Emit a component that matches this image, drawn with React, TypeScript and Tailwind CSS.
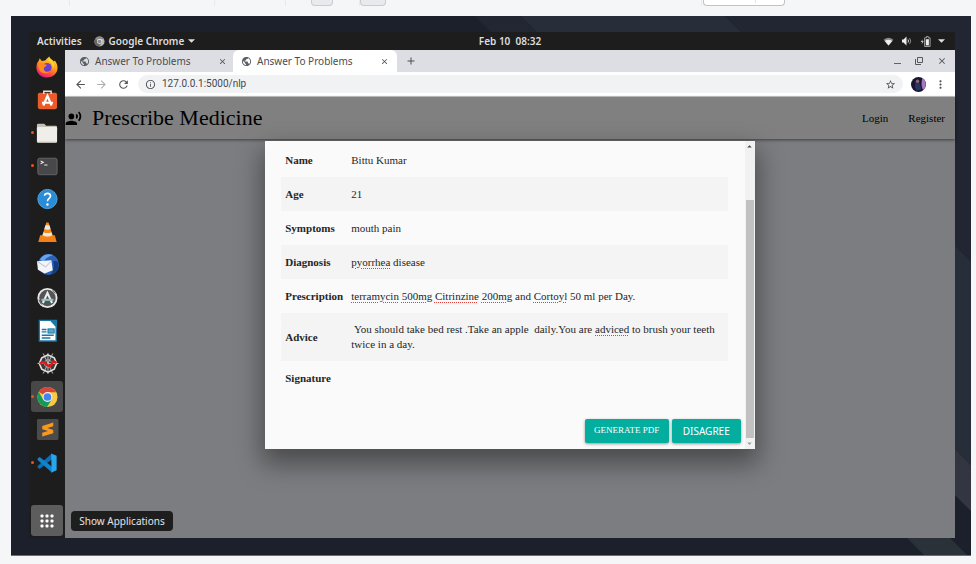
import type { ReactNode } from "react";
import {
  MdAdd,
  MdArrowBack,
  MdArrowForward,
  MdArrowDropDown,
  MdArrowDropUp,
  MdClose,
  MdInfoOutline,
  MdMoreVert,
  MdPublic,
  MdRecordVoiceOver,
  MdRefresh,
  MdStarBorder,
} from "react-icons/md";

const ui = "font-['Noto_Sans','Open_Sans',sans-serif]";
const serif = "font-['Liberation_Serif',serif]";

function Wallpaper() {
  return (
    <svg className="absolute inset-0 h-full w-full" viewBox="0 0 960 540" preserveAspectRatio="none" aria-hidden="true">
      <defs>
        <linearGradient id="band" x1="0" y1="0" x2="0" y2="1">
          <stop offset="0" stopColor="#212632" />
          <stop offset="1" stopColor="#343741" />
        </linearGradient>
      </defs>
      <rect width="960" height="540" fill="#1b202b" />
      <path d="M464 0H510L960 450V496Z" fill="url(#band)" />
      <path d="M510 0H714L960 246V450Z" fill="#282e39" />
      <path d="M714 0H960V246Z" fill="#212632" />
      <path d="M877 504H920L956 540H913Z" fill="#2b3139" />
    </svg>
  );
}

function Firefox() {
  return (
    <svg viewBox="0 0 24 24" className="size-[22px]">
      <defs>
        <linearGradient id="fx" x1="0.8" y1="0" x2="0.3" y2="1">
          <stop offset="0" stopColor="#ffe226" />
          <stop offset="0.45" stopColor="#ff9a1f" />
          <stop offset="0.75" stopColor="#ff4a3d" />
          <stop offset="1" stopColor="#e31587" />
        </linearGradient>
      </defs>
      <path d="M12 23.5C5.500 23.500.5 18.700.5 12.500C.5 9.500 1.500 7 3 5.300L4 2.500L6.300 5.500L10 5C11 3.500 13 2 14.500.5C15 3 18 4 19.500 6L20.500 5C22.500 7.500 23.500 10 23.500 12.800C23.500 19 18.500 23.500 12 23.500Z" fill="url(#fx)" />
      <circle cx="12" cy="12.500" r="5" fill="#6a3fd0" />
      <path d="M2.500 8C5 6.500 8 7.500 9 9L12 9.500C11.500 11.500 9 11.500 8.500 13.500C8.500 17.500 13 18 15.500 16C12 21 4 19 3 13Z" fill="#ff8a22" />
      <path d="M13 5C17 7 19 10 18 14.500C21 11 20 6 15.500 3Z" fill="#ffd42e" />
    </svg>
  );
}

function Software() {
  return (
    <svg viewBox="0 0 24 24" className="size-[22px]">
      <rect x="2" y="4" width="21" height="18" rx="2" fill="#ec5a29" />
      <path d="M8.500 5.500V2.500H16.500V5.500" fill="none" stroke="#e8e0dc" strokeWidth="1.600" />
      <path d="M8 18L12.500 7.500L17 18M6.500 15H18.500" fill="none" stroke="#fff" strokeWidth="2.400" />
    </svg>
  );
}

function Files() {
  return (
    <svg viewBox="0 0 24 24" className="size-[22px]">
      <path d="M1 3.500Q1 2 2.500 2H9L11 4H21.500Q23 4 23 5.500V10H1Z" fill="#c5c1b7" />
      <rect x="1" y="5.500" width="22" height="17" rx="1.500" fill="#f0eee9" />
      <path d="M1.500 22H22.500" stroke="#bdb9b0" />
    </svg>
  );
}

function Terminal() {
  return (
    <svg viewBox="0 0 24 24" className="size-[22px]">
      <rect x="2" y="3.500" width="21" height="18" rx="2" fill="#48484a" stroke="#68686a" />
      <path d="M5 6.500L8 8L5 9.500M9 11H12.500" fill="none" stroke="#eee" strokeWidth="1.100" />
    </svg>
  );
}

function Help() {
  return (
    <svg viewBox="0 0 24 24" className="size-[22px]">
      <circle cx="12.500" cy="12" r="10.500" fill="#2a8bd6" stroke="#55a8e6" />
      <path d="M9.300 8.500C9.300 5 15.800 5 15.800 8.800C15.800 11.500 12.500 11 12.500 14.500" fill="none" stroke="#fff" strokeWidth="1.800" />
      <circle cx="12.500" cy="18" r="1.300" fill="#fff" />
    </svg>
  );
}

function Vlc() {
  return (
    <svg viewBox="0 0 24 24" className="size-[22px]">
      <path d="M4.500 15.500H20.500L22.500 23H2.500Z" fill="#f57f17" />
      <path d="M11.300 1.500H13.700L18.500 17Q12.500 20.500 6.500 17Z" fill="#f48a1c" />
      <path d="M10.400 4.500H14.600L15.900 8.800Q12.500 10.200 9.100 8.800ZM8.100 12.200Q12.500 14.200 16.900 12.200L17.900 15.500Q12.500 18.500 7.100 15.500Z" fill="#e8e8e8" />
    </svg>
  );
}

function Thunderbird() {
  return (
    <svg viewBox="0 0 24 24" className="size-[23px]">
      <circle cx="13" cy="12" r="11" fill="#2b62b8" />
      <path d="M4 7Q8-1 18 2Q10 4 8 9Z" fill="#65a5ea" />
      <path d="M23.500 9Q25 19 15 23Q20 17 18 8Z" fill="#153b7d" />
      <path d="M1 8.500L16 7.500L17.500 18L9 21.500L2 17.500Z" fill="#f2f4f8" />
      <path d="M1.500 9L10 14.500L16 8.500" fill="none" stroke="#aebbd0" />
    </svg>
  );
}

function Updater() {
  return (
    <svg viewBox="0 0 24 24" className="size-[22px]">
      <circle cx="12.500" cy="12" r="10" fill="#555" stroke="#e8e8e8" strokeWidth="2" />
      <path d="M7.500 17.500L12.500 6.500L17.500 17.500" fill="none" stroke="#eee" strokeWidth="2.200" />
      <path d="M6 14H19" stroke="#8cc8d0" strokeWidth="2.200" />
      <path d="M3 14L6 19M18 3L21 7" stroke="#444" />
    </svg>
  );
}

function Writer() {
  return (
    <svg viewBox="0 0 24 24" className="size-[23px]">
      <path d="M3.500 1.500H15.500L21 7.500V23H3.500Z" fill="#fff" stroke="#1878a8" strokeWidth="1.400" />
      <path d="M14.500.8H22V9Z" fill="#1878a8" />
      <path d="M6 11H11M6 13.500H11M6 17H18.500M6 19.800H15" stroke="#1878a8" strokeWidth="1.400" />
      <rect x="12.500" y="10.300" width="6.500" height="4.400" fill="#5da4c5" stroke="#1878a8" />
    </svg>
  );
}

function Spyder() {
  return (
    <svg viewBox="0 0 24 24" className="size-[23px]">
      <circle cx="12.500" cy="12" r="8.500" fill="#3a3a3a" />
      <path d="M12.500 1V23M1.500 12H23.500M7.500 1.500L17.500 22.500M17.500 1.500L7.500 22.500" stroke="#bbb" />
      <path d="M12.500 3L19 6L21.500 12L19 18L12.500 21L6 18L3.500 12L6 6Z" fill="none" stroke="#e2e2e2" strokeWidth="1.700" />
      <path d="M12.500 8L15.300 9.200L16.500 12L15.300 14.800L12.500 16L9.700 14.800L8.500 12L9.700 9.200Z" fill="none" stroke="#aaa" />
      <path d="M4 12.500C7 9 9 11 11.500 13.500S16 14 17 11.500S20 10 21 12" fill="none" stroke="#e01818" strokeWidth="2.600" />
    </svg>
  );
}

function Chrome() {
  return (
    <svg viewBox="0 0 24 24" className="size-[22px]">
      <circle cx="12.500" cy="12" r="11" fill="#f7cb45" />
      <path d="M12.500 12L3 6.500A11 11 0 0 1 22 6.700H12.500Z" fill="#d8453b" />
      <path d="M3 6.500A11 11 0 0 0 12 23L17.200 14.700L12.500 12L7.900 14.700Z" fill="#139b58" />
      <circle cx="12.500" cy="12" r="5.400" fill="#f2f2f2" />
      <circle cx="12.500" cy="12" r="4.200" fill="#4384f0" />
    </svg>
  );
}

function GreyChrome() {
  return (
    <svg viewBox="0 0 24 24" className="size-[11px]" aria-hidden="true">
      <circle cx="12" cy="12" r="11" fill="#b8b8b8" />
      <path d="M12 12L2.500 6.500A11 11 0 0 1 21.500 6.700H12Z" fill="#8c8c8c" />
      <path d="M2.500 6.500A11 11 0 0 0 11.500 23L16.700 14.700L12 12Z" fill="#666" />
      <circle cx="12" cy="12" r="5.400" fill="#eee" />
      <circle cx="12" cy="12" r="4" fill="#888" />
    </svg>
  );
}

function Sublime() {
  return (
    <svg viewBox="0 0 24 24" className="size-[23px]">
      <rect x="1" y="1" width="22.500" height="22" rx="1.500" fill="#4b4b4b" />
      <path d="M6.500 8.300L18 4.800V8.600L12 10.500L18 12.400V15.800L6.500 19.300V15.500L12.500 13.600L6.500 11.700Z" fill="#f8981d" />
    </svg>
  );
}

function VsCode() {
  return (
    <svg viewBox="0 0 24 24" className="size-[22px]">
      <path d="M17 2L1.800 15.200V17L4 18.500L17.500 8Z" fill="#0a6fb8" />
      <path d="M17 22L1.800 8.800V7L4 5.500L17.500 16Z" fill="#1184cd" />
      <path d="M16.500 1.500L22.500 4V20L16.500 22.500L17 18Z" fill="#2aa4ee" />
    </svg>
  );
}

const dock: { name: string; icon: ReactNode; running?: boolean; active?: boolean }[] = [
  { name: "Firefox", icon: <Firefox /> },
  { name: "Ubuntu Software", icon: <Software /> },
  { name: "Files", icon: <Files />, running: true },
  { name: "Terminal", icon: <Terminal />, running: true },
  { name: "Help", icon: <Help /> },
  { name: "VLC", icon: <Vlc /> },
  { name: "Thunderbird", icon: <Thunderbird /> },
  { name: "Software Updater", icon: <Updater /> },
  { name: "Writer", icon: <Writer /> },
  { name: "Spyder", icon: <Spyder /> },
  { name: "Chrome", icon: <Chrome />, running: true, active: true },
  { name: "Sublime Text", icon: <Sublime /> },
  { name: "Visual Studio Code", icon: <VsCode />, running: true },
];

function Dock() {
  return (
    <nav aria-label="Dock" className="flex w-9 shrink-0 flex-col bg-[#1d1d1d] pl-[2px]">
      {dock.map((app) => (
        <div key={app.name} className="relative flex h-[33px] items-center">
          {app.running && <span className="absolute left-0 size-[3px] rounded-full bg-[#e95420]" />}
          <button
            type="button"
            aria-label={app.name}
            className={`flex h-[31px] w-8 items-center justify-center rounded-[3px] ${app.active ? "bg-[#484848]" : ""}`}
          >
            {app.icon}
          </button>
        </div>
      ))}
      <div className="relative mt-auto mb-[2px] flex items-center">
        <button type="button" aria-label="Show Applications" className="flex h-[31px] w-8 items-center justify-center rounded-[3px] bg-[#5d5d5d]">
          <svg viewBox="0 0 14 14" className="size-[14px]" fill="#fff">
            {[0, 1, 2].map((r) => [0, 1, 2].map((c) => <rect key={`${r}${c}`} x={c * 5 + 0.5} y={r * 5 + 0.5} width="3" height="3" rx="1" />))}
          </svg>
        </button>
        <div role="tooltip" className="absolute left-10 z-10 flex h-5 w-[102px] items-center justify-center rounded bg-[#1e1e1e] text-[10px] leading-5 whitespace-nowrap text-[#e4e4e4]">
          Show Applications
        </div>
      </div>
    </nav>
  );
}

function Caret() {
  return (
    <svg viewBox="0 0 8 4" className="h-1 w-[7px]" fill="#dedede"><path d="M0 0H8L4 4Z" /></svg>
  );
}

function TopBar() {
  return (
    <header className="grid h-[18px] grid-cols-3 items-center bg-[#1d1d1d] text-[10px] leading-4 font-semibold text-[#dedede]">
      <div className="flex items-center pl-2">
        <span>Activities</span>
        <span className="ml-3 flex items-center gap-1">
          <GreyChrome />
          Google Chrome
          <Caret />
        </span>
      </div>
      <div className="pl-9 text-center whitespace-pre">Feb 10  08:32</div>
      <div className="flex items-center justify-end gap-[7px] pr-[10px]">
        <svg viewBox="0 0 12 10" className="h-[9px] w-[11px]" fill="none">
          <path d="M.5 3Q6-1.500 11.500 3L6 9.500Z" fill="#888" />
          <path d="M1.800 4.500Q6 1.500 10.200 4.500L6 9.500Z" fill="#eee" />
        </svg>
        <svg viewBox="0 0 12 10" className="h-[10px] w-3" fill="none">
          <path d="M1 3.500H2.500L5.500.5V9.500L2.500 6.500H1Z" fill="#eee" />
          <path d="M7 3.500Q8 5 7 6.500" stroke="#ddd" />
          <path d="M8.500 2Q11 5 8.500 8" stroke="#888" />
        </svg>
        <svg viewBox="0 0 12 12" className="size-[11px]" fill="none">
          <path d="M3 3.500L.8 6.500H2.400L1.800 9L4 5.800H2.500Z" fill="#ddd" />
          <path d="M7 .5H9V2H11V11.500H5V2H7Z" stroke="#aaa" />
          <path d="M6.300 3.500H9.700V10.300H6.300Z" fill="#eee" />
        </svg>
        <Caret />
      </div>
    </header>
  );
}

function Tab({ active }: { active?: boolean }) {
  return (
    <div className={`flex h-full items-center ${active ? "w-[164px] rounded-t-md bg-white px-2" : "w-[168px] pr-[6px] pl-[14px]"}`}>
      <MdPublic size={11} className="shrink-0 text-[#5a5f66]" />
      <span className="ml-[5px] flex-1 whitespace-nowrap">Answer To Problems</span>
      <button type="button" aria-label="Close tab" className="shrink-0"><MdClose size={9} /></button>
    </div>
  );
}

function BrowserChrome() {
  return (
    <>
      <div className="flex h-[22px] items-center bg-[#dddee4] text-[10px] text-[#4a4d52]">
        <Tab />
        <Tab active />
        <button type="button" aria-label="New tab" className="ml-2"><MdAdd size={12} /></button>
        <div className="mr-2 ml-auto flex items-center gap-[14px]">
          <button type="button" aria-label="Minimise" className="mt-1 h-px w-[7px] bg-[#5f6368]" />
          <button type="button" aria-label="Restore">
            <svg viewBox="0 0 8 8" className="size-2" fill="none" stroke="#55585e">
              <path d="M2.500.5H7.500V5.500H2.500ZM.5 2V7.500H6" />
            </svg>
          </button>
          <button type="button" aria-label="Close"><MdClose size={10} /></button>
        </div>
      </div>
      <div className="flex h-[25px] items-center border-b border-[#c9c9c9] bg-white pl-[9px] text-[#505357]">
        <button type="button" aria-label="Back"><MdArrowBack size={13} /></button>
        <button type="button" aria-label="Forward" className="ml-2 text-[#adafb2]"><MdArrowForward size={13} /></button>
        <button type="button" aria-label="Reload" className="ml-[9px]"><MdRefresh size={13} /></button>
        <div className="ml-2 flex h-[18px] flex-1 items-center rounded-full bg-[#f1f2f4] px-[7px]">
          <MdInfoOutline size={11} />
          <input
            aria-label="Address"
            defaultValue="127.0.0.1:5000/nlp"
            className="ml-[6px] min-w-0 flex-1 bg-transparent font-['Roboto',sans-serif] text-[10px] leading-4 text-[#45484c] outline-none"
          />
          <button type="button" aria-label="Bookmark"><MdStarBorder size={11} /></button>
        </div>
        <svg viewBox="0 0 16 16" className="ml-2 size-[15px]" aria-hidden="true">
          <circle cx="8" cy="8" r="8" fill="#17162e" />
          <path d="M12 1.200A8 8 0 0 1 13 14Q10 10 12 1.200Z" fill="#a678bb" />
          <path d="M5 4Q8 2 9 6L11 13L6 15L4 10Z" fill="#293363" />
          <circle cx="7" cy="4.500" r="1.800" fill="#8c6875" />
        </svg>
        <button type="button" aria-label="Menu" className="mr-2 ml-2"><MdMoreVert size={13} /></button>
      </div>
    </>
  );
}

function Typo({ children }: { children: ReactNode }) {
  return <span className="underline decoration-[#e0403c] decoration-dotted decoration-1 underline-offset-2">{children}</span>;
}

const rows: { label: string; value: ReactNode }[] = [
  { label: "Name", value: "Bittu Kumar" },
  { label: "Age", value: "21" },
  { label: "Symptoms", value: "mouth pain" },
  { label: "Diagnosis", value: <><Typo>pyorrhea</Typo> disease</> },
  {
    label: "Prescription",
    value: <><Typo>terramycin</Typo> <Typo>500mg</Typo> <Typo>Citrinzine</Typo> <Typo>200mg</Typo> and <Typo>Cortoyl</Typo> 50 ml per Day.</>,
  },
  {
    label: "Advice",
    value: <>{" You should take bed rest .Take an apple  daily.You are "}<Typo>adviced</Typo> to brush your teeth twice in a day.</>,
  },
  { label: "Signature", value: "" },
];

function Modal() {
  return (
    <div role="dialog" aria-label="Prescription" className="flex w-[55%] bg-[#fafafa] shadow-[0_12px_24px_3px_rgba(0,0,0,0.4)]">
      <div className="flex min-w-0 flex-1 flex-col pt-[2px] pb-[6px]">
        <table className={`mr-[17px] ml-4 border-collapse text-left text-[11px] leading-[15px] text-[#262626] ${serif}`}>
          <tbody>
            {rows.map((row, i) => (
              <tr key={row.label} className={i % 2 ? "bg-[#f4f4f4]" : ""}>
                <th scope="row" className="w-[66px] py-[9px] pl-1 font-bold">{row.label}</th>
                <td className="h-[34px] py-[9px] pr-2 pl-1 whitespace-pre-wrap">{row.value}</td>
              </tr>
            ))}
          </tbody>
        </table>
        <div className="mt-6 mr-1 flex justify-end gap-[3px] text-white">
          <button type="button" className={`h-6 w-[84px] rounded-[2px] bg-[#03ae9f] text-[9px] whitespace-nowrap shadow-[0_1px_3px_rgba(0,0,0,0.4)] ${serif}`}>
            GENERATE PDF
          </button>
          <button type="button" className="h-6 w-[69px] rounded-[2px] bg-[#03ae9f] text-[10px] shadow-[0_1px_3px_rgba(0,0,0,0.4)]">
            DISAGREE
          </button>
        </div>
      </div>
      <div className="flex w-[10px] shrink-0 flex-col items-center bg-[#f1f1f1]" aria-hidden="true">
        <MdArrowDropUp size={11} className="shrink-0 text-[#444]" />
        <div className="mt-12 w-2 flex-1 bg-[#c1c1c1]" />
        <MdArrowDropDown size={11} className="shrink-0 text-[#a0a0a0]" />
      </div>
    </div>
  );
}

function PageStrip() {
  return (
    <div className="flex h-4 shrink-0 overflow-hidden" aria-hidden="true">
      <div className="h-[6px] w-[70px] border-r border-[#e9eaed]" />
      <div className="h-[6px] w-[145px] border-r border-[#e9eaed]" />
      <div className="h-[6px] w-[71px] border-r border-[#e9eaed]" />
      <div className="ml-[25px] h-[6px] w-[22px] rounded-b border border-t-0 border-[#c9cbcf] bg-[#e9eaed]" />
      <div className="ml-[25px] h-[6px] w-[2px] border-r border-[#e9eaed]" />
      <div className="h-[6px] w-[26px] rounded-b border border-t-0 border-[#c9cbcf] bg-[#e9eaed]" />
      <div className="ml-[315px] h-[6px] w-[2px] border-l border-[#e9eaed]" />
      <div className="flex h-[6px] w-[82px] rounded-b border border-t-0 border-[#bfc3cc] bg-white">
        <div className="h-[3px] w-[52px] border-r border-[#e2e4e8]" />
      </div>
    </div>
  );
}

export default function App() {
  return (
    <div className={`flex min-h-screen flex-col bg-[#f5f6f8] ${ui}`}>
      <PageStrip />
      <div className="relative mr-[5px] mb-2 ml-[11px] flex flex-1 border-b border-[#6b6e78] pt-4 pr-4 pb-[17px] pl-[18px]">
        <Wallpaper />
        <div className="relative flex min-w-0 flex-1 flex-col">
          <TopBar />
          <div className="flex flex-1">
            <Dock />
            <div className="flex min-w-0 flex-1 flex-col bg-[#7c7d80]">
              <BrowserChrome />
              <div className={`flex h-[42px] items-center bg-[#808080] text-black shadow-[0_1px_3px_rgba(0,0,0,0.5)] ${serif}`}>
                <MdRecordVoiceOver size={17} />
                <h1 className="ml-[10px] text-[22px] leading-7">Prescribe Medicine</h1>
                <nav className="mr-[10px] ml-auto flex gap-5 text-[11px] leading-4">
                  <a href="#login">Login</a>
                  <a href="#register">Register</a>
                </nav>
              </div>
              <main className="flex items-start justify-center pt-[2px]">
                <Modal />
              </main>
            </div>
          </div>
        </div>
      </div>
    </div>
  );
}
